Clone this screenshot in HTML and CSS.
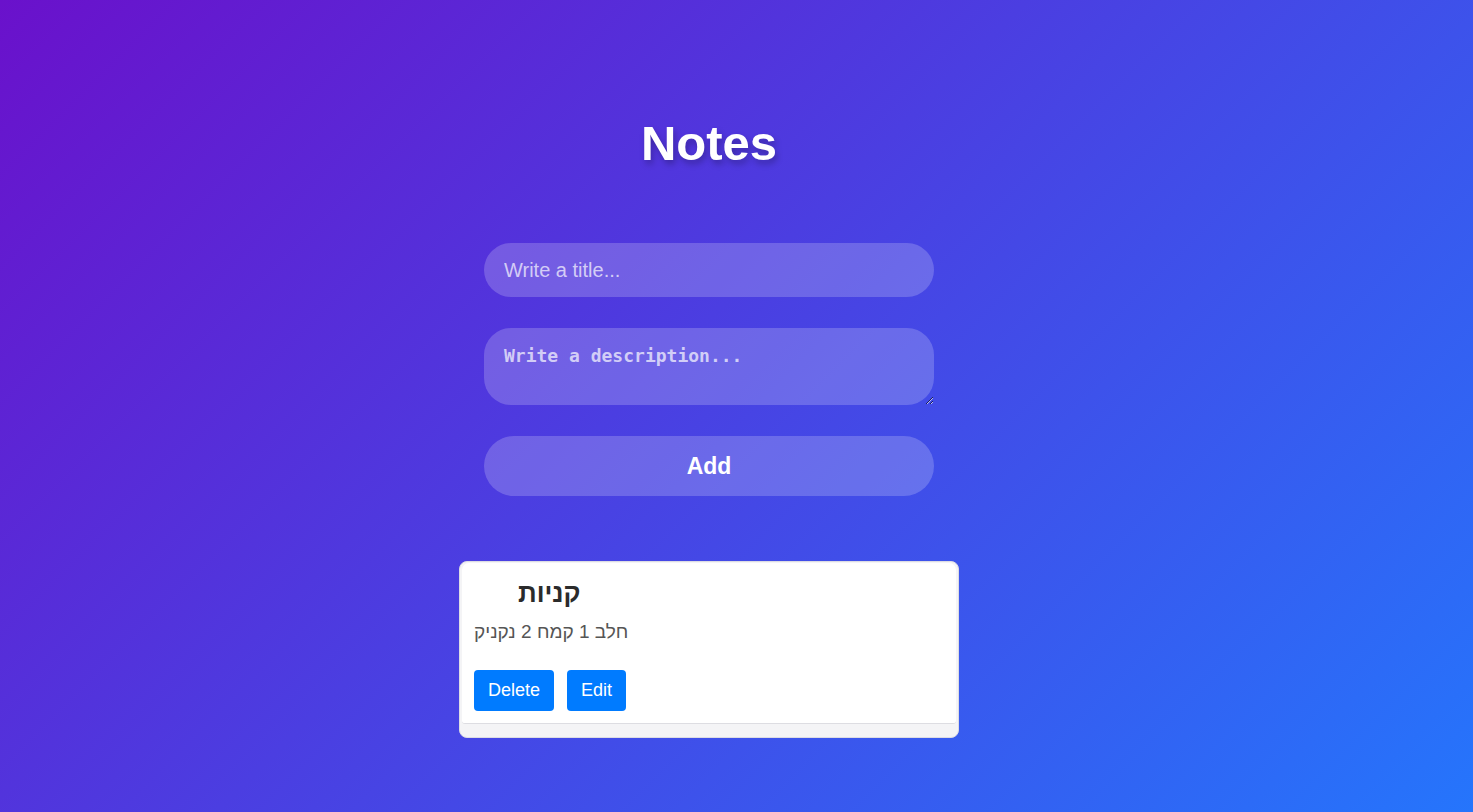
FILE: index.html
```html
<!DOCTYPE html>
<html lang="en">
<head>
<meta charset="utf-8">
<title>Notes</title>
<link rel="stylesheet" href="styles.css">
</head>
<body>
<main class="page">
  <h1 class="page-title">Notes</h1>
  <form class="note-form">
    <input class="field field-title" type="text" placeholder="Write a title...">
    <textarea class="field field-desc" placeholder="Write a description..."></textarea>
    <button class="add-btn" type="button">Add</button>
  </form>
  <section class="notes-list">
    <article class="note">
      <h2 class="note-title">קניות</h2>
      <p class="note-desc">חלב 1 קמח 2 נקניק</p>
      <div class="note-actions">
        <button class="note-btn" type="button">Delete</button>
        <button class="note-btn" type="button">Edit</button>
      </div>
    </article>
  </section>
</main>
</body>
</html>
```
FILE: styles.css
```css
* { box-sizing: border-box; }
html, body { height: 100%; }
body {
  margin: 0;
  font-family: "Liberation Sans", Arial, sans-serif;
  background: linear-gradient(135deg, #6a11cb 0%, #2575fc 100%);
  min-height: 100vh;
  overflow: hidden;
}
.page {
  display: flex;
  flex-direction: column;
  align-items: center;
  padding: 116px 55px 0 0;
}
.page-title {
  margin: 0;
  color: #fff;
  font-size: 49px;
  font-weight: 700;
  line-height: 55px;
  text-shadow: 2px 4px 6px rgba(0, 0, 0, 0.25);
}
.note-form {
  margin-top: 72px;
  width: 450px;
  display: flex;
  flex-direction: column;
  gap: 31px;
}
.field {
  width: 100%;
  border: none;
  outline: none;
  background: rgba(255, 255, 255, 0.2);
  color: #fff;
  border-radius: 27px;
  padding: 0 20px;
}
.field::placeholder { color: rgba(255, 255, 255, 0.7); }
.field-title {
  height: 54px;
  font-family: "Liberation Sans", Arial, sans-serif;
  font-size: 20px;
}
.field-desc {
  height: 77px;
  padding: 17px 20px;
  font-family: "DejaVu Sans Mono", "Liberation Mono", monospace;
  font-size: 18px;
  font-weight: 700;
  line-height: 22px;
  resize: vertical;
  display: block;
}
.add-btn {
  height: 60px;
  border: none;
  border-radius: 30px;
  background: rgba(255, 255, 255, 0.2);
  color: #fff;
  font-family: "Liberation Sans", Arial, sans-serif;
  font-size: 23px;
  font-weight: 700;
}
.notes-list {
  margin-top: 65px;
  width: 500px;
  background: #f4f4f6;
  border: 1px solid #dcdce4;
  border-radius: 8px;
  padding: 1px 2px 13px 2px;
}
.note {
  background: #fff;
  border-bottom: 1px solid #dddde2;
  border-radius: 7px 7px 3px 3px;
  padding: 15px 12px 12px 12px;
}
.note-title {
  margin: 0 0 12px 44px;
  font-size: 26px;
  font-weight: 700;
  line-height: 30px;
  color: #2b2b2b;
}
.note-desc {
  margin: 0 0 27px 0;
  font-size: 19px;
  line-height: 23px;
  color: #555;
}
.note-actions {
  display: flex;
  gap: 13px;
}
.note-btn {
  height: 41px;
  padding: 0 14px;
  border: none;
  border-radius: 4px;
  background: #007bff;
  color: #fff;
  font-family: "Liberation Sans", Arial, sans-serif;
  font-size: 18px;
}
```
